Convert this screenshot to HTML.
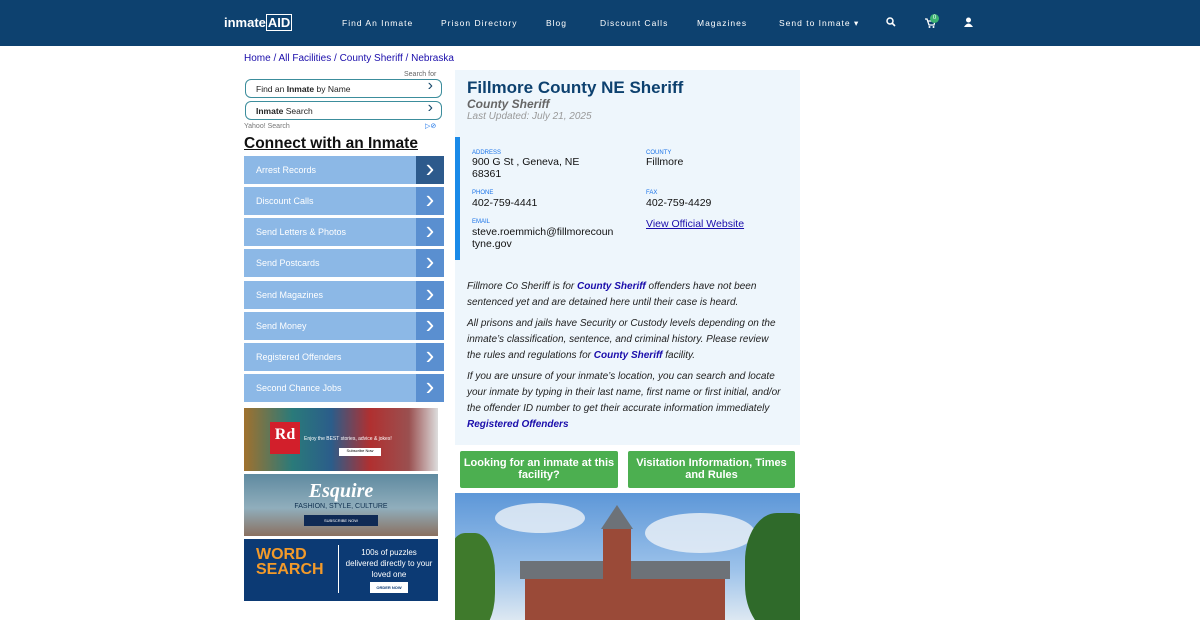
<!DOCTYPE html>
<html><head><meta charset="utf-8"><style>
*{box-sizing:border-box;margin:0;padding:0}
body{width:1200px;height:620px;overflow:hidden;background:#fff;font-family:"Liberation Sans",sans-serif;position:relative}
.nav{position:absolute;left:0;top:0;width:1200px;height:46px;background:#0d416f}
.nav span{position:absolute;top:18px;color:#fff;font-size:8.5px;letter-spacing:1px}
.logo{position:absolute;left:224px;top:15px;color:#fff;font-weight:bold;font-size:13px}
.crumb{position:absolute;left:244px;top:53px;font-size:10px;color:#1a0dab}
.box{position:absolute;left:245px;width:197px;height:19px;border:1px solid #3c8d9c;border-radius:6px;font-size:8.5px;padding:4px 10px;color:#222}
.box:after{content:"›";position:absolute;right:8px;top:-3px;font-size:16px;color:#1a4a6b}
.menu{position:absolute;left:244px;width:200px;height:28px;background:#8cb8e6;color:#fff;font-size:9px;padding:9px 12px}
.menu b{position:absolute;right:0;top:0;width:28px;height:28px;background:#5a8fd0;color:#fff;font-size:26px;line-height:24px;text-align:center;font-weight:normal}
.main{position:absolute;left:455px;top:70px;width:345px;height:375px;background:#eef6fc}
.lbl{position:absolute;font-size:6px;color:#1a73e8}
.val{position:absolute;font-size:10.5px;color:#111;line-height:11.5px}
.p{position:absolute;left:467px;width:318px;font-size:10px;font-style:italic;line-height:16px;color:#222}
.p a{color:#1a0dab;font-weight:bold;text-decoration:none}
.btn{position:absolute;top:451px;height:37px;background:#4caf50;border-radius:2px;color:#fff;font-weight:bold;font-size:11px;text-align:center;padding-top:6px;line-height:12px}
</style></head><body>
<div class="nav">
<div class="logo">inmate<span style="position:static;font-size:13px;letter-spacing:0;border:1px solid #fff;padding:0 1px">AID</span></div>
<span style="left:342px">Find An Inmate</span>
<span style="left:441px">Prison Directory</span>
<span style="left:546px">Blog</span>
<span style="left:600px">Discount Calls</span>
<span style="left:697px">Magazines</span>
<span style="left:779px">Send to Inmate ▾</span>
<svg style="position:absolute;left:886px;top:17px" width="10" height="10"><circle cx="4" cy="4" r="3" stroke="#fff" stroke-width="1.5" fill="none"/><path d="M6 6L9 9" stroke="#fff" stroke-width="1.6"/></svg>
<svg style="position:absolute;left:925px;top:18px" width="10" height="10"><path d="M0 1H2L4 7H9L10 3H3" stroke="#fff" stroke-width="1.3" fill="none"/><circle cx="4.5" cy="9" r="1" fill="#fff"/><circle cx="8.5" cy="9" r="1" fill="#fff"/></svg>
<div style="position:absolute;left:930px;top:14px;width:9px;height:9px;border-radius:50%;background:#3cb371;font-size:6px;color:#fff;text-align:center;line-height:9px">0</div>
<svg style="position:absolute;left:964px;top:17px" width="9" height="10"><circle cx="4.5" cy="3" r="2.5" fill="#fff"/><path d="M0 10 Q4.5 3 9 10Z" fill="#fff"/></svg>
</div>
<div class="crumb">Home / All Facilities / County Sheriff / Nebraska</div>
<div style="position:absolute;left:404px;top:71px;font-size:7px;color:#666">Search for</div>
<div class="box" style="top:79px">Find an <b>Inmate</b> by Name</div>
<div class="box" style="top:101px"><b>Inmate</b> Search</div>
<div style="position:absolute;left:244px;top:123px;font-size:7px;color:#777">Yahoo! Search</div>
<div style="position:absolute;left:425px;top:122px;font-size:7px;color:#1a73e8">▷⊘</div>
<div style="position:absolute;left:244px;top:135px;font-size:15.5px;font-weight:bold;text-decoration:underline;color:#111">Connect with an Inmate</div>
<div class="menu" style="top:156px">Arrest Records<b style="background:#2d5a8c">›</b></div>
<div class="menu" style="top:187px">Discount Calls<b>›</b></div>
<div class="menu" style="top:218px">Send Letters &amp; Photos<b>›</b></div>
<div class="menu" style="top:249px">Send Postcards<b>›</b></div>
<div class="menu" style="top:281px">Send Magazines<b>›</b></div>
<div class="menu" style="top:312px">Send Money<b>›</b></div>
<div class="menu" style="top:343px">Registered Offenders<b>›</b></div>
<div class="menu" style="top:374px">Second Chance Jobs<b>›</b></div>
<div style="position:absolute;left:244px;top:408px;width:194px;height:63px;background:linear-gradient(90deg,#a0712e,#2a7a7a 25%,#2b5d8a 45%,#b03030 65%,#9a5050 85%,#ddd)"><div style="position:absolute;left:26px;top:14px;width:30px;height:32px;background:#d21f2b;color:#fff;font:bold 16px 'Liberation Serif',serif;text-align:center;padding-top:4px">Rd</div><div style="position:absolute;left:60px;top:28px;color:#fff;font-size:5px">Enjoy the BEST stories, advice &amp; jokes!</div><div style="position:absolute;left:95px;top:40px;width:42px;height:8px;background:#fff;font-size:4px;text-align:center">Subscribe Now</div></div>
<div style="position:absolute;left:244px;top:474px;width:194px;height:62px;background:linear-gradient(#5f8aa0,#90aebc 55%,#8a7060)"><div style="position:absolute;width:100%;top:6px;text-align:center;color:#fff;font:bold italic 20px 'Liberation Serif',serif">Esquire</div><div style="position:absolute;width:100%;top:29px;text-align:center;color:#103050;font-size:7px">FASHION, STYLE, CULTURE</div><div style="position:absolute;left:60px;top:41px;width:74px;height:11px;background:#0f2a55;color:#fff;font-size:4px;text-align:center;padding-top:3px">SUBSCRIBE NOW</div></div>
<div style="position:absolute;left:244px;top:539px;width:194px;height:62px;background:#0c3a74"><div style="position:absolute;left:12px;top:8px;color:#f39a2a;font-weight:bold;font-size:16px;line-height:15px">WORD<br>SEARCH</div><div style="position:absolute;left:94px;top:6px;width:1px;height:48px;background:#fff"></div><div style="position:absolute;left:100px;top:8px;width:90px;color:#fff;font-size:8px;text-align:center;line-height:11px">100s of puzzles delivered directly to your loved one</div><div style="position:absolute;left:126px;top:43px;width:38px;height:11px;background:#fff;font-size:4px;color:#0c3a74;text-align:center;padding-top:3px;font-weight:bold">ORDER NOW</div></div>
<div class="main"></div>
<div style="position:absolute;left:467px;top:78px;font-size:17px;font-weight:bold;color:#0d416f">Fillmore County NE Sheriff</div>
<div style="position:absolute;left:467px;top:97px;font-size:12px;font-weight:bold;font-style:italic;color:#666">County Sheriff</div>
<div style="position:absolute;left:467px;top:111px;font-size:10px;font-style:italic;color:#999">Last Updated: July 21, 2025</div>
<div style="position:absolute;left:455px;top:137px;width:5px;height:123px;background:#1a8ae8"></div>
<div class="lbl" style="left:472px;top:150px">ADDRESS</div><div class="val" style="left:472px;top:157px;width:120px">900 G St , Geneva, NE 68361</div>
<div class="lbl" style="left:646px;top:150px">COUNTY</div><div class="val" style="left:646px;top:157px">Fillmore</div>
<div class="lbl" style="left:472px;top:190px">PHONE</div><div class="val" style="left:472px;top:198px">402-759-4441</div>
<div class="lbl" style="left:646px;top:190px">FAX</div><div class="val" style="left:646px;top:198px">402-759-4429</div>
<div class="lbl" style="left:472px;top:219px">EMAIL</div><div class="val" style="left:472px;top:227px;width:142px;word-break:break-all">steve.roemmich@fillmorecountyne.gov</div>
<div class="val" style="left:646px;top:219px;color:#1a0dab;text-decoration:underline">View Official Website</div>
<div class="p" style="top:279px">Fillmore Co Sheriff is for <a>County Sheriff</a> offenders have not been sentenced yet and are detained here until their case is heard.</div>
<div class="p" style="top:316px">All prisons and jails have Security or Custody levels depending on the inmate’s classification, sentence, and criminal history. Please review the rules and regulations for <a>County Sheriff</a> facility.</div>
<div class="p" style="top:369px">If you are unsure of your inmate’s location, you can search and locate your inmate by typing in their last name, first name or first initial, and/or the offender ID number to get their accurate information immediately<br><a>Registered Offenders</a></div>
<div class="btn" style="left:460px;width:158px">Looking for an inmate at this facility?</div>
<div class="btn" style="left:628px;width:167px">Visitation Information, Times and Rules</div>
<div style="position:absolute;left:455px;top:493px;width:345px;height:127px;background:linear-gradient(#5d97d8,#9cc2ea 60%,#dde8f2);overflow:hidden">
<div style="position:absolute;left:40px;top:10px;width:90px;height:30px;background:#eef3f8;border-radius:50%;opacity:.8"></div>
<div style="position:absolute;left:190px;top:20px;width:110px;height:40px;background:#eef3f8;border-radius:50%;opacity:.8"></div>
<div style="position:absolute;left:-10px;top:40px;width:50px;height:100px;background:#3f7a2c;border-radius:40%"></div>
<div style="position:absolute;left:290px;top:20px;width:80px;height:120px;background:#2f6a2a;border-radius:40%"></div>
<div style="position:absolute;left:70px;top:84px;width:200px;height:50px;background:#9a4a38"></div>
<div style="position:absolute;left:65px;top:68px;width:210px;height:18px;background:#6d7278"></div>
<div style="position:absolute;left:148px;top:35px;width:28px;height:55px;background:#9a4a38"></div>
<svg style="position:absolute;left:146px;top:12px" width="32" height="24"><path d="M16 0L32 24H0Z" fill="#6d7278"/></svg>
</div>
</body></html>
